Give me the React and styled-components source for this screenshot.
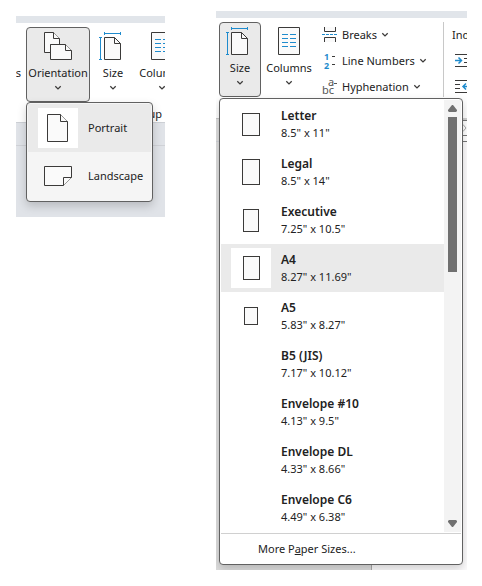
import React from "react";
import styled, { createGlobalStyle } from "styled-components";

const color = {
  text: "#222222",
  ink: "#3b3a39",
  blue: "#1e8bcd",
  strip: "#e1e5ea",
  border: "#616161",
  hover: "#eaeaea",
  white: "#ffffff"
};

const GlobalStyle = createGlobalStyle`
  * {
    box-sizing: border-box;
  }
  body {
    margin: 0;
    background: ${color.white};
    color: ${color.text};
    font: 11px/16px "Noto Sans", "Open Sans", sans-serif;
  }
  button {
    margin: 0;
    padding: 0;
    border: 0;
    background: none;
    color: inherit;
    font: inherit;
    text-align: left;
  }
  svg {
    display: block;
    flex: none;
    overflow: visible;
  }
`;

const Page = styled.main`
  display: grid;
  grid-template-columns: 149fr 251fr;
  align-items: start;
  gap: 51px;
  padding: 11px 15px 16px 16px;
`;

const Window = styled.section`
  overflow: hidden;
  margin-top: ${props => props.$offset || 0}px;
`;

const TitleStrip = styled.div`
  height: 7px;
  background: ${color.strip};
`;

const Ribbon = styled.div`
  padding: 4px 0 ${props => props.$bottom}px ${props => props.$left || 0}px;
`;

const Tools = styled.div`
  display: flex;
  height: 75px;
`;

const MenuAnchor = styled.div`
  position: relative;
  flex: none;
`;

const BigButton = styled.button`
  display: flex;
  flex: none;
  flex-direction: column;
  align-items: center;
  width: ${props => props.$width}px;
  height: 75px;
  padding-top: 4px;
  border: 1px solid ${props => (props.$open ? color.border : "transparent")};
  border-radius: 4px;
  background: ${props => (props.$open ? color.hover : "transparent")};
  white-space: nowrap;
  span {
    margin: 5px 0 4px;
  }
`;

const CutButton = styled.button`
  display: flex;
  flex: none;
  justify-content: flex-end;
  width: 10px;
  padding: 38px 5px 0 0;
  overflow: hidden;
`;

const GroupLabel = styled.div`
  height: 16px;
  margin-top: 4px;
  padding-right: 3px;
  text-align: right;
`;

const SmallTools = styled.div`
  flex: 1;
  min-width: 0;
  padding-left: 5px;
`;

const SmallButton = styled.button`
  display: flex;
  align-items: center;
  gap: 4px;
  height: 26px;
  white-space: nowrap;
`;

const IndentTools = styled.div`
  display: grid;
  flex: none;
  grid-auto-rows: 26px;
  align-items: center;
  width: 24px;
  padding-left: 8px;
  overflow: hidden;
  border-left: 1px solid #c8c8c8;
`;

const Menu = styled.div`
  position: absolute;
  z-index: 2;
  top: 100%;
  left: 0;
  width: ${props => props.$width}px;
  margin-top: ${props => props.$gap || 0}px;
  padding: 1px;
  border: 1px solid ${color.border};
  border-radius: 4px;
  background: ${props => props.$background || color.white};
  box-shadow: 0 4px 10px rgba(0, 0, 0, 0.18);
`;

const MenuItem = styled.button`
  display: flex;
  align-items: center;
  gap: 10px;
  width: 100%;
  height: 48px;
  padding-left: 10px;
  background: ${props => (props.$selected ? color.hover : "transparent")};
  white-space: nowrap;
`;

const IconTile = styled.span`
  display: flex;
  align-items: center;
  justify-content: center;
  width: 40px;
  height: 40px;
  background: ${props => (props.$selected ? color.white : "transparent")};
`;

const PaperText = styled.span`
  line-height: 17px;
  b,
  span {
    display: block;
  }
  b {
    font-size: 12px;
    font-weight: 600;
  }
`;

const PaperShape = styled.span`
  width: ${props => props.$width}px;
  height: ${props => props.$height}px;
  border: 1px solid ${color.ink};
  background: #fafafa;
`;

const ScrollArea = styled.div`
  display: flex;
  border-bottom: 1px solid #d0d0d0;
  padding-bottom: 1px;
`;

const PaperList = styled.div`
  flex: 1;
`;

const ScrollBar = styled.div`
  display: flex;
  flex-direction: column;
  align-items: center;
  justify-content: space-between;
  width: 17px;
  padding: 5px 0;
  background: #f3f3f3;
`;

const ScrollTrack = styled.div`
  flex: 1;
  width: 9px;
  padding-top: 5px;
`;

const ScrollThumb = styled.div`
  height: 155px;
  background: #707070;
`;

const MoreButton = styled.button`
  width: 100%;
  height: 29px;
  padding-left: 37px;
`;

const Desk = styled.div`
  height: 95px;
  border-top: 1px solid #cdd0d5;
  background: #e0e3e8;
`;

const DeskRuler = styled.div`
  height: 23px;
  border-bottom: 1px solid #d0d2d7;
`;

const Document = styled.div`
  display: grid;
  grid-template-columns: 156fr 95fr;
  height: 452px;
`;

const DocumentSide = styled.div`
  border-top: 1px solid #c6c6c6;
  border-right: 1px solid #aaaaaa;
  background: #dedede;
`;

const DocumentPage = styled.div`
  display: flex;
  flex-direction: column;
  align-items: flex-end;
  background: #fdfcfd;
`;

const PageRuler = styled.div`
  display: flex;
  align-items: center;
  justify-content: flex-end;
  width: 100%;
  height: ${props => props.$height}px;
  border-bottom: 1px solid #777777;
  background: ${props => props.$background || color.white};
`;

const Chevron = () => (
  <svg width="8" height="6" viewBox="0 0 8 6" fill="none" stroke={color.ink} strokeWidth="1.3">
    <path d="M1.3 1.3 4 3.9 6.7 1.3" />
  </svg>
);

const OrientationIcon = () => (
  <svg width="28" height="28" viewBox="0 0 28 28" fill="#fafafa" stroke={color.ink}>
    <path d="M6.5 20.5H.5V.5H9.5L15.5 6.5V12.5H6.5Z" />
    <path d="M9.5.5V6.5H15.5" />
    <path d="M6.5 12.5H21.5L27.5 18.5V27.5H6.5Z" />
    <path d="M21.5 12.5V18.5H27.5" />
  </svg>
);

const SizeIcon = () => (
  <svg width="28" height="28" viewBox="0 0 28 28" fill="none" stroke={color.ink}>
    <path d="M5.5 5.5H15.5L21.5 11.5V27.5H5.5Z" fill="#fafafa" />
    <path d="M15.5 5.5V11.5H21.5" />
    <path
      d="M1.5 5.5V27.5M0 5.5H3M0 27.5H3M5.5 1.5H21.5M5.5 0V3M21.5 0V3"
      stroke={color.blue}
    />
  </svg>
);

const ColumnsIcon = () => (
  <svg width="28" height="28" viewBox="0 0 28 28" fill="none" stroke={color.ink}>
    <path d="M3.5.5H24.5V27.5H3.5Z" fill="#fafafa" />
    <path
      d="M7 7.5H13M7 11.5H13M7 15.5H13M7 19.5H13M15 7.5H21M15 11.5H21M15 15.5H21M15 19.5H21"
      stroke={color.blue}
    />
  </svg>
);

const BreaksIcon = () => (
  <svg width="16" height="16" viewBox="0 0 16 16" fill="#fafafa" stroke={color.ink}>
    <path d="M2.5 0V4.5H13.5V0M2.5 15V10.5H13.5V15" />
    <path d="M0 7.5H16" stroke={color.blue} strokeDasharray="3 1" />
  </svg>
);

const LineNumbersIcon = () => (
  <svg width="16" height="18" viewBox="0 0 16 18" fill={color.blue} fontSize="9" fontWeight="700">
    <text x="2" y="8">1</text>
    <text x="2" y="17">2</text>
    <path d="M10 4.5H13M10 12.5H13" stroke={color.ink} />
  </svg>
);

const HyphenationIcon = () => (
  <svg width="16" height="18" viewBox="0 0 16 18" fill="#555555" fontSize="11">
    <text x="6" y="8">a</text>
    <text x="0" y="16">bc</text>
    <path d="M12 5.5H15" stroke="#555555" />
  </svg>
);

const IndentIcon = ({ right }) => (
  <svg width="20" height="14" viewBox="0 0 20 14" fill="none" stroke={color.ink}>
    <path d="M3 .5H20M3 12.5H20" />
    <path d={right ? "M3 4.5H8M3 8.5H8" : "M12 4.5H20M12 8.5H20"} />
    <path
      d={right ? "M18 6.5H11M14 3.5 11 6.5 14 9.5" : "M3 6.5H9M6.5 3.5 9.5 6.5 6.5 9.5"}
      stroke={color.blue}
      strokeWidth="1.5"
    />
  </svg>
);

const PortraitIcon = () => (
  <svg width="22" height="28" viewBox="0 0 22 28" fill="#fafafa" stroke={color.ink}>
    <path d="M.5.5H13.5L20.5 7.5V27.5H.5Z" />
    <path d="M13.5.5V7.5H20.5" />
  </svg>
);

const LandscapeIcon = () => (
  <svg width="28" height="20" viewBox="0 0 28 20" fill="#fafafa" stroke={color.ink}>
    <path d="M.5.5H27.5V11.5L19.5 19.5H.5Z" />
    <path d="M19.5 19.5V11.5H27.5" />
  </svg>
);

const ScrollArrow = ({ down }) => (
  <svg width="9" height="7" viewBox="0 0 9 7" fill="#707070">
    <path d={down ? "M0 1 1 0H8L9 1V2L5 7H4L0 2Z" : "M0 6 1 7H8L9 6V5L5 0H4L0 5Z"} />
  </svg>
);

const PageArrow = () => (
  <svg width="5" height="8" viewBox="0 0 5 8" fill="none" stroke="#aaaaaa">
    <path d="M0 .5H1L4 4 1 7.5H0" />
  </svg>
);

const papers = [
  { name: "Letter", size: '8.5" x 11"', width: 18, height: 23 },
  { name: "Legal", size: '8.5" x 14"', width: 18, height: 26 },
  { name: "Executive", size: '7.25" x 10.5"', width: 16, height: 23 },
  { name: "A4", size: '8.27" x 11.69"', width: 17, height: 24, selected: true },
  { name: "A5", size: '5.83" x 8.27"', width: 14, height: 18 },
  { name: "B5 (JIS)", size: '7.17" x 10.12"' },
  { name: "Envelope #10", size: '4.13" x 9.5"' },
  { name: "Envelope DL", size: '4.33" x 8.66"' },
  { name: "Envelope C6", size: '4.49" x 6.38"' }
];

const RibbonButton = ({ icon, label, width, open }) => (
  <BigButton $width={width} $open={open} aria-expanded={!!open}>
    {icon}
    <span>{label}</span>
    <Chevron />
  </BigButton>
);

const OrientationWindow = () => (
  <Window $offset={5}>
    <TitleStrip />
    <Ribbon $bottom={0}>
      <Tools>
        <CutButton>Margins</CutButton>
        <MenuAnchor>
          <RibbonButton icon={<OrientationIcon />} label="Orientation" width={64} open />
          <Menu $width={127} $background="#f5f5f5">
            <MenuItem $selected>
              <IconTile $selected>
                <PortraitIcon />
              </IconTile>
              Portrait
            </MenuItem>
            <MenuItem>
              <IconTile>
                <LandscapeIcon />
              </IconTile>
              Landscape
            </MenuItem>
          </Menu>
        </MenuAnchor>
        <RibbonButton icon={<SizeIcon />} label="Size" width={46} />
        <RibbonButton icon={<ColumnsIcon />} label="Columns" width={52} />
      </Tools>
      <GroupLabel>Page Setup</GroupLabel>
    </Ribbon>
    <Desk>
      <DeskRuler />
    </Desk>
  </Window>
);

const SizeWindow = () => (
  <Window>
    <TitleStrip />
    <Ribbon $bottom={21} $left={3}>
      <Tools>
        <MenuAnchor>
          <RibbonButton icon={<SizeIcon />} label="Size" width={42} open />
          <Menu $width={244} $gap={1}>
            <ScrollArea>
              <PaperList>
                {papers.map(paper => (
                  <MenuItem key={paper.name} $selected={paper.selected}>
                    <IconTile $selected={paper.selected}>
                      {paper.width && <PaperShape $width={paper.width} $height={paper.height} />}
                    </IconTile>
                    <PaperText>
                      <b>{paper.name}</b>
                      <span>{paper.size}</span>
                    </PaperText>
                  </MenuItem>
                ))}
              </PaperList>
              <ScrollBar>
                <ScrollArrow />
                <ScrollTrack>
                  <ScrollThumb />
                </ScrollTrack>
                <ScrollArrow down />
              </ScrollBar>
            </ScrollArea>
            <MoreButton>
              More P<u>a</u>per Sizes...
            </MoreButton>
          </Menu>
        </MenuAnchor>
        <RibbonButton icon={<ColumnsIcon />} label="Columns" width={56} />
        <SmallTools>
          <SmallButton>
            <BreaksIcon />
            Breaks
            <Chevron />
          </SmallButton>
          <SmallButton>
            <LineNumbersIcon />
            Line Numbers
            <Chevron />
          </SmallButton>
          <SmallButton>
            <HyphenationIcon />
            Hyphenation
            <Chevron />
          </SmallButton>
        </SmallTools>
        <IndentTools>
          <span>Indent</span>
          <IndentIcon />
          <IndentIcon right />
        </IndentTools>
      </Tools>
    </Ribbon>
    <Document>
      <DocumentSide>
        <DeskRuler />
      </DocumentSide>
      <DocumentPage>
        <PageRuler $height={3} $background="#d0d0d0" />
        <PageRuler $height={15}>
          <PageArrow />
        </PageRuler>
        <PageRuler $height={6} />
      </DocumentPage>
    </Document>
  </Window>
);

export default () => (
  <Page>
    <GlobalStyle />
    <OrientationWindow />
    <SizeWindow />
  </Page>
);
